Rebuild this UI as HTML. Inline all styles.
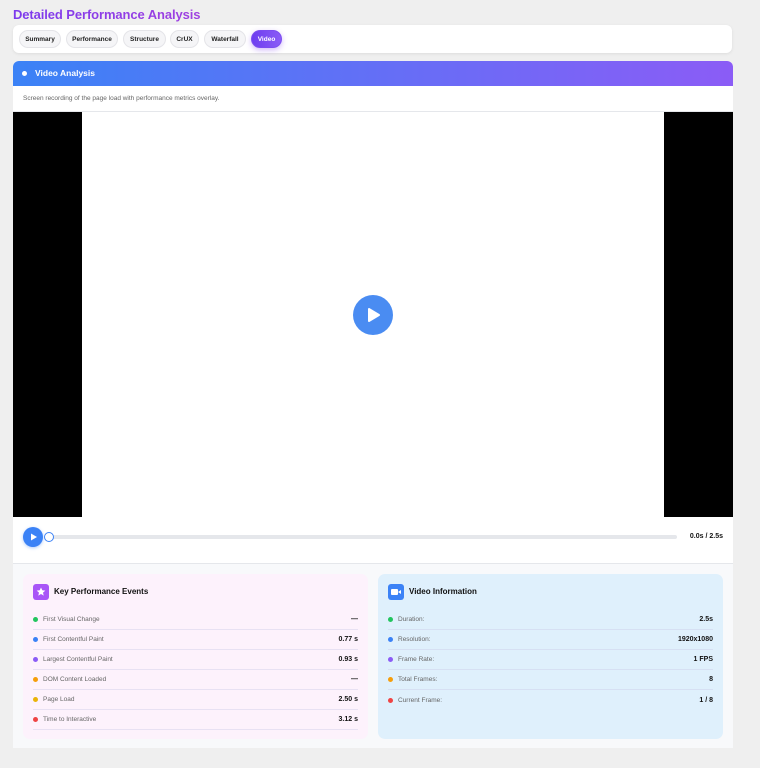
<!DOCTYPE html>
<html><head><meta charset="utf-8"><style>
*{box-sizing:border-box;margin:0;padding:0}
body{width:760px;height:768px;background:#efefef;font-family:"Liberation Sans",sans-serif;position:relative;overflow:hidden}
.abs{position:absolute}
h1{position:absolute;left:13px;top:7px;font-size:13px;font-weight:bold;letter-spacing:-0.1px;background:linear-gradient(90deg,#7c3aed,#a040e0);-webkit-background-clip:text;color:transparent;white-space:nowrap}
.tabs{left:13px;top:25px;width:719px;height:28px;background:#fff;border-radius:6px;box-shadow:0 1px 3px rgba(0,0,0,.08)}
.tab{position:absolute;top:5px;height:18px;border-radius:9px;background:#f5f5f7;border:1px solid #e4e4e8;font-size:6.5px;font-weight:bold;color:#222;display:flex;align-items:center;justify-content:center}
.card{left:13px;top:61px;width:720px;height:687px;background:#fff;border-radius:6px 6px 0 0;overflow:hidden}
.hdr{height:25px;background:linear-gradient(90deg,#3b82f6,#8b5cf6);color:#fff;font-size:8.5px;font-weight:bold;line-height:25px;padding-left:22px;position:relative}
.hdr:before{content:"";position:absolute;left:9px;top:10px;width:5px;height:5px;border-radius:50%;background:#fff}
.desc{height:26px;font-size:6.5px;color:#666;line-height:25px;padding-left:10px;border-bottom:1px solid #e5e7eb}
.panel{position:absolute;top:513px;width:345px;height:165px;border-radius:7px;padding:10px 10px}
.ph{font-size:8px;font-weight:bold;color:#111;height:16px;line-height:16px;padding-left:21px;position:relative;margin-bottom:10px}
.ic{position:absolute;left:0;top:0;width:16px;height:16px;border-radius:3px}
.row{height:20px;border-bottom:1px solid rgba(200,200,230,.4);font-size:6.5px;color:#666;display:flex;align-items:center}
.row b{margin-left:auto;color:#111;font-size:7px}
.row i{display:block;width:5px;height:5px;border-radius:50%;margin-right:5px;flex:none}
</style></head><body>
<h1>Detailed Performance Analysis</h1>
<div class="abs tabs">
<div class="tab" style="left:6px;width:42px">Summary</div>
<div class="tab" style="left:53px;width:52px">Performance</div>
<div class="tab" style="left:110px;width:43px">Structure</div>
<div class="tab" style="left:157px;width:29px">CrUX</div>
<div class="tab" style="left:191px;width:42px">Waterfall</div>
<div class="tab" style="left:238px;width:31px;background:linear-gradient(90deg,#6d3df0,#8b5cf6);border-color:#7c4df0;color:#fff;box-shadow:0 2px 6px rgba(124,58,237,.35)">Video</div>
</div>
<div class="abs card">
<div class="hdr">Video Analysis</div>
<div class="desc">Screen recording of the page load with performance metrics overlay.</div>
<div class="abs" style="left:0;top:51px;width:720px;height:405px;background:#fff">
<div class="abs" style="left:0;top:0;width:69px;height:405px;background:#000"></div>
<div class="abs" style="left:651px;top:0;width:69px;height:405px;background:#000"></div>
<div class="abs" style="left:340px;top:183px;width:40px;height:40px;border-radius:50%;background:#4a8cf2"><svg width="40" height="40"><path d="M16 14 L26 20 L16 26Z" fill="#fff" stroke="#fff" stroke-width="2" stroke-linejoin="round"/></svg></div>
</div>
<div class="abs" style="left:10px;top:466px;width:20px;height:20px;border-radius:50%;background:#3b82f6;box-shadow:0 1px 3px rgba(59,130,246,.4)"><svg width="20" height="20"><path d="M8 6.5 L14 10 L8 13.5Z" fill="#fff"/></svg></div>
<div class="abs" style="left:33px;top:474px;width:631px;height:4px;border-radius:2px;background:#e5e7eb"></div>
<div class="abs" style="left:31px;top:471px;width:10px;height:10px;border-radius:50%;background:#fff;border:1.5px solid #3b82f6"></div>
<div class="abs" style="right:10px;top:472px;font-size:7px;font-weight:bold;color:#111">0.0s / 2.5s</div>
<div class="abs" style="left:0;top:502px;width:720px;height:185px;background:#f8f9fb;border-top:1px solid #e5e7eb"></div>
<div class="panel" style="left:10px;background:#fdf2fc">
<div class="ph"><span class="ic" style="background:#a855f7"><svg width="16" height="16"><path d="M8 3.5l1.3 2.8 3 .3-2.3 2 .7 3L8 10l-2.7 1.6.7-3-2.3-2 3-.3z" fill="#fff"/></svg></span>Key Performance Events</div>
<div class="row"><i style="background:#22c55e"></i>First Visual Change<b>—</b></div>
<div class="row"><i style="background:#3b82f6"></i>First Contentful Paint<b>0.77 s</b></div>
<div class="row"><i style="background:#8b5cf6"></i>Largest Contentful Paint<b>0.93 s</b></div>
<div class="row"><i style="background:#f59e0b"></i>DOM Content Loaded<b>—</b></div>
<div class="row"><i style="background:#eab308"></i>Page Load<b>2.50 s</b></div>
<div class="row"><i style="background:#ef4444"></i>Time to Interactive<b>3.12 s</b></div>
</div>
<div class="panel" style="left:365px;background:#dff0fc">
<div class="ph"><span class="ic" style="background:#3b82f6"><svg width="16" height="16"><rect x="3" y="5" width="7" height="6" rx="1" fill="#fff"/><path d="M10 8l3-2v4z" fill="#fff"/></svg></span>Video Information</div>
<div class="row"><i style="background:#22c55e"></i>Duration:<b>2.5s</b></div>
<div class="row"><i style="background:#3b82f6"></i>Resolution:<b>1920x1080</b></div>
<div class="row"><i style="background:#8b5cf6"></i>Frame Rate:<b>1 FPS</b></div>
<div class="row"><i style="background:#f59e0b"></i>Total Frames:<b>8</b></div>
<div class="row" style="border:0"><i style="background:#ef4444"></i>Current Frame:<b>1 / 8</b></div>
</div>
</div>
</body></html>
